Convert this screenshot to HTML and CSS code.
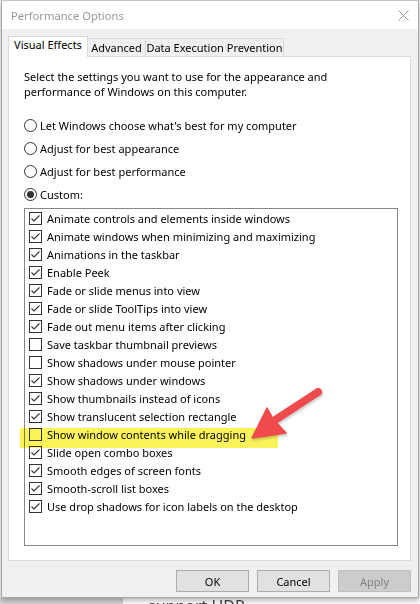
FILE: index.html
```html
<!DOCTYPE html>
<html lang="en">

<head>
    <meta charset="UTF-8">
    <meta name="viewport" content="width=device-width, initial-scale=1.0">
    <title>Performance Options</title>
    <link rel="stylesheet" href="styles.css">
</head>

<body>
    <div class="dialog">
        <div class="titlebar">
            <span class="title">Performance Options</span>
            <svg class="close" width="11" height="11" viewBox="0 0 11 11">
                <path d="M0.5 0.5 L10.5 10.5 M10.5 0.5 L0.5 10.5" stroke="#999" stroke-width="1" fill="none" />
            </svg>
        </div>
        <div class="body">
            <div class="tabs">
                <div class="tab active">Visual Effects</div>
                <div class="tab tab-adv">Advanced</div>
                <div class="tab tab-dep">Data Execution Prevention</div>
            </div>
            <div class="panel">
                <p class="intro">Select the settings you want to use for the appearance and<br>performance of Windows on this computer.</p>
                <div class="radios">
                    <div class="radio"><span class="circle"></span>Let Windows choose what's best for my computer</div>
                    <div class="radio"><span class="circle"></span>Adjust for best appearance</div>
                    <div class="radio"><span class="circle"></span>Adjust for best performance</div>
                    <div class="radio"><span class="circle on"></span>Custom:</div>
                </div>
                <div class="list" id="effects"></div>
            </div>
            <div class="actions">
                <button>OK</button>
                <button>Cancel</button>
                <button class="disabled">Apply</button>
            </div>
        </div>
    </div>
    <div class="under">
        <div class="under-left"></div>
        <div class="under-text">support HDR.</div>
    </div>

    <!-- annotation: highlighter + arrow -->
    <div class="highlight"></div>
    <svg class="arrow" width="420" height="604" viewBox="0 0 420 604">
        <g fill="#f04a4c" stroke="#f04a4c">
            <line x1="318" y1="392" x2="272" y2="422" stroke-width="8" stroke-linecap="round" />
            <path d="M252 438 L267 408 L273 419 L286 433 Z" stroke-width="1.5" stroke-linejoin="round" />
        </g>
    </svg>

    <script>
        const effects = [
            ['Animate controls and elements inside windows', true],
            ['Animate windows when minimizing and maximizing', true],
            ['Animations in the taskbar', true],
            ['Enable Peek', true],
            ['Fade or slide menus into view', true],
            ['Fade or slide ToolTips into view', true],
            ['Fade out menu items after clicking', true],
            ['Save taskbar thumbnail previews', false],
            ['Show shadows under mouse pointer', false],
            ['Show shadows under windows', true],
            ['Show thumbnails instead of icons', true],
            ['Show translucent selection rectangle', true],
            ['Show window contents while dragging', false],
            ['Slide open combo boxes', true],
            ['Smooth edges of screen fonts', true],
            ['Smooth-scroll list boxes', true],
            ['Use drop shadows for icon labels on the desktop', true]
        ];

        const tick = '<svg width="11" height="11" viewBox="0 0 11 11"><polyline points="1.5,5.5 4,8 9.5,2.5" fill="none" stroke="#333" stroke-width="1.1" /></svg>';

        const list = document.getElementById('effects');
        effects.forEach(([label, checked]) => {
            const row = document.createElement('div');
            row.className = 'item';
            row.innerHTML = '<span class="box">' + (checked ? tick : '') + '</span>' + label;
            list.appendChild(row);
        });
    </script>
</body>

</html>
```

FILE: styles.css
```css
body {
    margin: 0;
    background: #ffffff;
    font-family: "Noto Sans", "Open Sans", sans-serif;
    font-size: 11px;
    color: #000000;
    width: 420px;
    height: 604px;
    overflow: hidden;
    position: relative;
}

.dialog {
    margin-left: 1px;
    width: 416px;
    border: 1px solid #a8a8a8;
    border-top-color: #c4c4c4;
    background: #f0f0f0;
    box-shadow: 0 2px 6px rgba(0, 0, 0, 0.35);
    position: relative;
}

.titlebar {
    height: 28px;
    background: #ffffff;
    display: flex;
    align-items: center;
    justify-content: space-between;
    padding: 0 9px 0 9px;
}

.title {
    color: #999999;
    font-size: 11.2px;
    padding-top: 1px;
}

.body {
    padding: 7px 7px 5px 6px;
}

.tabs {
    display: flex;
    align-items: flex-end;
    height: 20px;
}

.tab {
    box-sizing: border-box;
    height: 18px;
    border: 1px solid #d9d9d9;
    border-bottom: none;
    margin-left: -1px;
    text-align: center;
    line-height: 17px;
    background: #f0f0f0;
}

.tab.active {
    height: 21px;
    width: 80px;
    margin-left: 0;
    margin-bottom: -1px;
    background: #ffffff;
    line-height: 16px;
    position: relative;
    z-index: 1;
}

.tab-adv {
    width: 59px;
}

.tab-dep {
    width: 139px;
}

.panel {
    box-sizing: border-box;
    height: 505px;
    border: 1px solid #d9d9d9;
    background: #ffffff;
    padding: 12px 13px 0 15px;
}

.intro {
    margin: 0;
    line-height: 15px;
}

.radios {
    margin-top: 15px;
}

.radio {
    height: 23px;
    display: flex;
    align-items: center;
}

.circle {
    box-sizing: border-box;
    width: 13px;
    height: 13px;
    border: 1px solid #333333;
    border-radius: 50%;
    margin-right: 3px;
    display: flex;
    align-items: center;
    justify-content: center;
    background: #ffffff;
}

.circle.on::after {
    content: "";
    width: 7px;
    height: 7px;
    border-radius: 50%;
    background: #333333;
}

.list {
    box-sizing: border-box;
    margin-top: 2px;
    width: 374px;
    height: 338px;
    border: 1px solid #828790;
    padding: 0 0 0 4px;
}

.item {
    height: 18px;
    display: flex;
    align-items: center;
}

.box {
    box-sizing: border-box;
    width: 13px;
    height: 13px;
    border: 1px solid #333333;
    margin-right: 5px;
    flex-shrink: 0;
    background: #ffffff;
}

.box svg {
    display: block;
}

.actions {
    display: flex;
    justify-content: flex-end;
    gap: 8px;
    margin-top: 9px;
}

button {
    box-sizing: border-box;
    width: 73px;
    height: 22px;
    border: 1px solid #adadad;
    background: #e1e1e1;
    font-family: inherit;
    font-size: 11px;
    color: #000000;
    padding: 0;
}

button.disabled {
    background: #cccccc;
    border-color: #bfbfbf;
    color: #838383;
}

.under {
    display: flex;
    height: 6px;
    overflow: hidden;
}

.under-left {
    width: 123px;
    background: #d4d4d4;
}

.under-text {
    margin-left: 25px;
    font-size: 16px;
    line-height: 16px;
    color: #444444;
}

.highlight {
    position: absolute;
    left: 20px;
    top: 428px;
    width: 258px;
    height: 20px;
    background: #faf35a;
    mix-blend-mode: multiply;
}

.arrow {
    position: absolute;
    left: 0;
    top: 0;
    pointer-events: none;
    filter: drop-shadow(1px 2px 1px rgba(0, 0, 0, 0.2));
}
```
